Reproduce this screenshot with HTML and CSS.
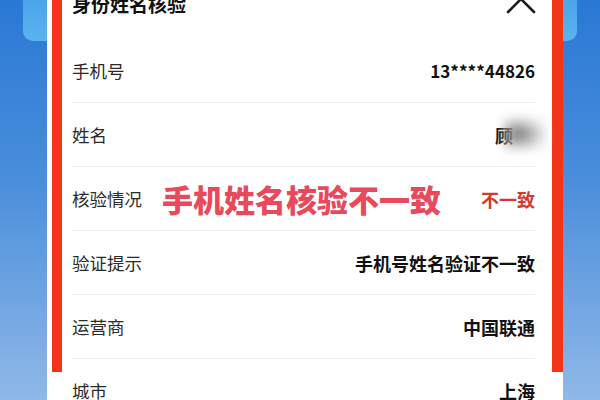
FILE: index.html
```html
<!DOCTYPE html>
<html lang="zh-CN">
<head>
    <meta charset="UTF-8">
    <meta name="viewport" content="width=device-width, initial-scale=1.0">
    <title>身份姓名核验</title>
    <link rel="stylesheet" href="styles.css">
</head>
<body>
    <div class="page">
        <div class="side side-left"><div class="tab"></div></div>
        <div class="card">
            <div class="frame">
                <div class="header">
                    <h2 class="title">身份姓名核验</h2>
                    <svg class="close" width="30" height="30" viewBox="0 0 30 30">
                        <path d="M2 2 L28 28 M28 2 L2 28" stroke="#1e1e1e" stroke-width="2.6" stroke-linecap="round" fill="none"/>
                    </svg>
                </div>
                <ul class="rows">
                    <li class="row">
                        <span class="label">手机号</span>
                        <span class="value num">13****44826</span>
                    </li>
                    <li class="row">
                        <span class="label">姓名</span>
                        <span class="value masked">顾<span class="blur"></span></span>
                    </li>
                    <li class="row">
                        <span class="label">核验情况</span>
                        <span class="stamp">手机姓名核验不一致</span>
                        <span class="value warn">不一致</span>
                    </li>
                    <li class="row">
                        <span class="label">验证提示</span>
                        <span class="value">手机号姓名验证不一致</span>
                    </li>
                    <li class="row">
                        <span class="label">运营商</span>
                        <span class="value">中国联通</span>
                    </li>
                    <li class="row">
                        <span class="label">城市</span>
                        <span class="value">上海</span>
                    </li>
                </ul>
            </div>
        </div>
        <div class="side side-right"><div class="tab"></div></div>
    </div>
</body>
</html>
```

FILE: styles.css
```css
body {
    margin: 0;
    font-family: 'Noto Sans CJK SC', 'Noto Sans', sans-serif;
    color: #222;
    overflow: hidden;
}
.page {
    display: flex;
    width: 600px;
    height: 400px;
    background: linear-gradient(180deg, #2a78d5 0%, #4a8edc 45%, #90b8e8 100%);
    overflow: hidden;
}
.side {
    flex: 0 0 auto;
}
.side-left {
    width: 47px;
    display: flex;
    justify-content: flex-end;
}
.side-right {
    width: 37px;
}
.tab {
    width: 24px;
    height: 41px;
    background: linear-gradient(180deg, #4aa6e8, #5ab3ee);
}
.side-left .tab {
    border-bottom-left-radius: 10px;
}
.side-right .tab {
    width: 14px;
    border-bottom-right-radius: 10px;
}
.card {
    width: 516px;
    background: #fff;
    padding-left: 5px;
    box-sizing: border-box;
}
.frame {
    height: 100%;
    border-left: 10px solid #f0351a;
    border-right: 11px solid #f0351a;
    padding: 0 17px 0 10px;
}
.header {
    display: flex;
    justify-content: space-between;
    align-items: center;
    height: 63px;
    margin-top: -28px;
    margin-bottom: 4px;
}
.title {
    margin: 0;
    font-size: 19px;
    font-weight: bold;
    color: #111;
}
.close {
    margin-right: -1px;
    margin-top: -10px;
}
.rows {
    list-style: none;
    margin: 0;
    padding: 0;
}
.row {
    display: flex;
    align-items: center;
    height: 63px;
    border-bottom: 1px solid #eeeeee;
    font-size: 17.5px;
}
.label {
    color: #2a2a2a;
}
.value {
    margin-left: auto;
    font-size: 18px;
    font-weight: bold;
    color: #111;
}
.num {
    font-size: 17px;
}
.warn {
    color: #cf3b30;
}
.stamp {
    margin-left: 20px;
    font-size: 31px;
    font-weight: 900;
    color: #e84a5c;
}
.masked {
    position: relative;
    margin-right: 22px;
}
.blur {
    position: absolute;
    left: 8px;
    top: -6px;
    width: 44px;
    height: 36px;
    background: radial-gradient(ellipse at 35% 50%, rgba(110, 110, 110, 0.95) 0%, rgba(170, 170, 170, 0.7) 40%, rgba(225, 225, 225, 0.4) 70%, rgba(255, 255, 255, 0) 100%);
    filter: blur(4px);
}
```
